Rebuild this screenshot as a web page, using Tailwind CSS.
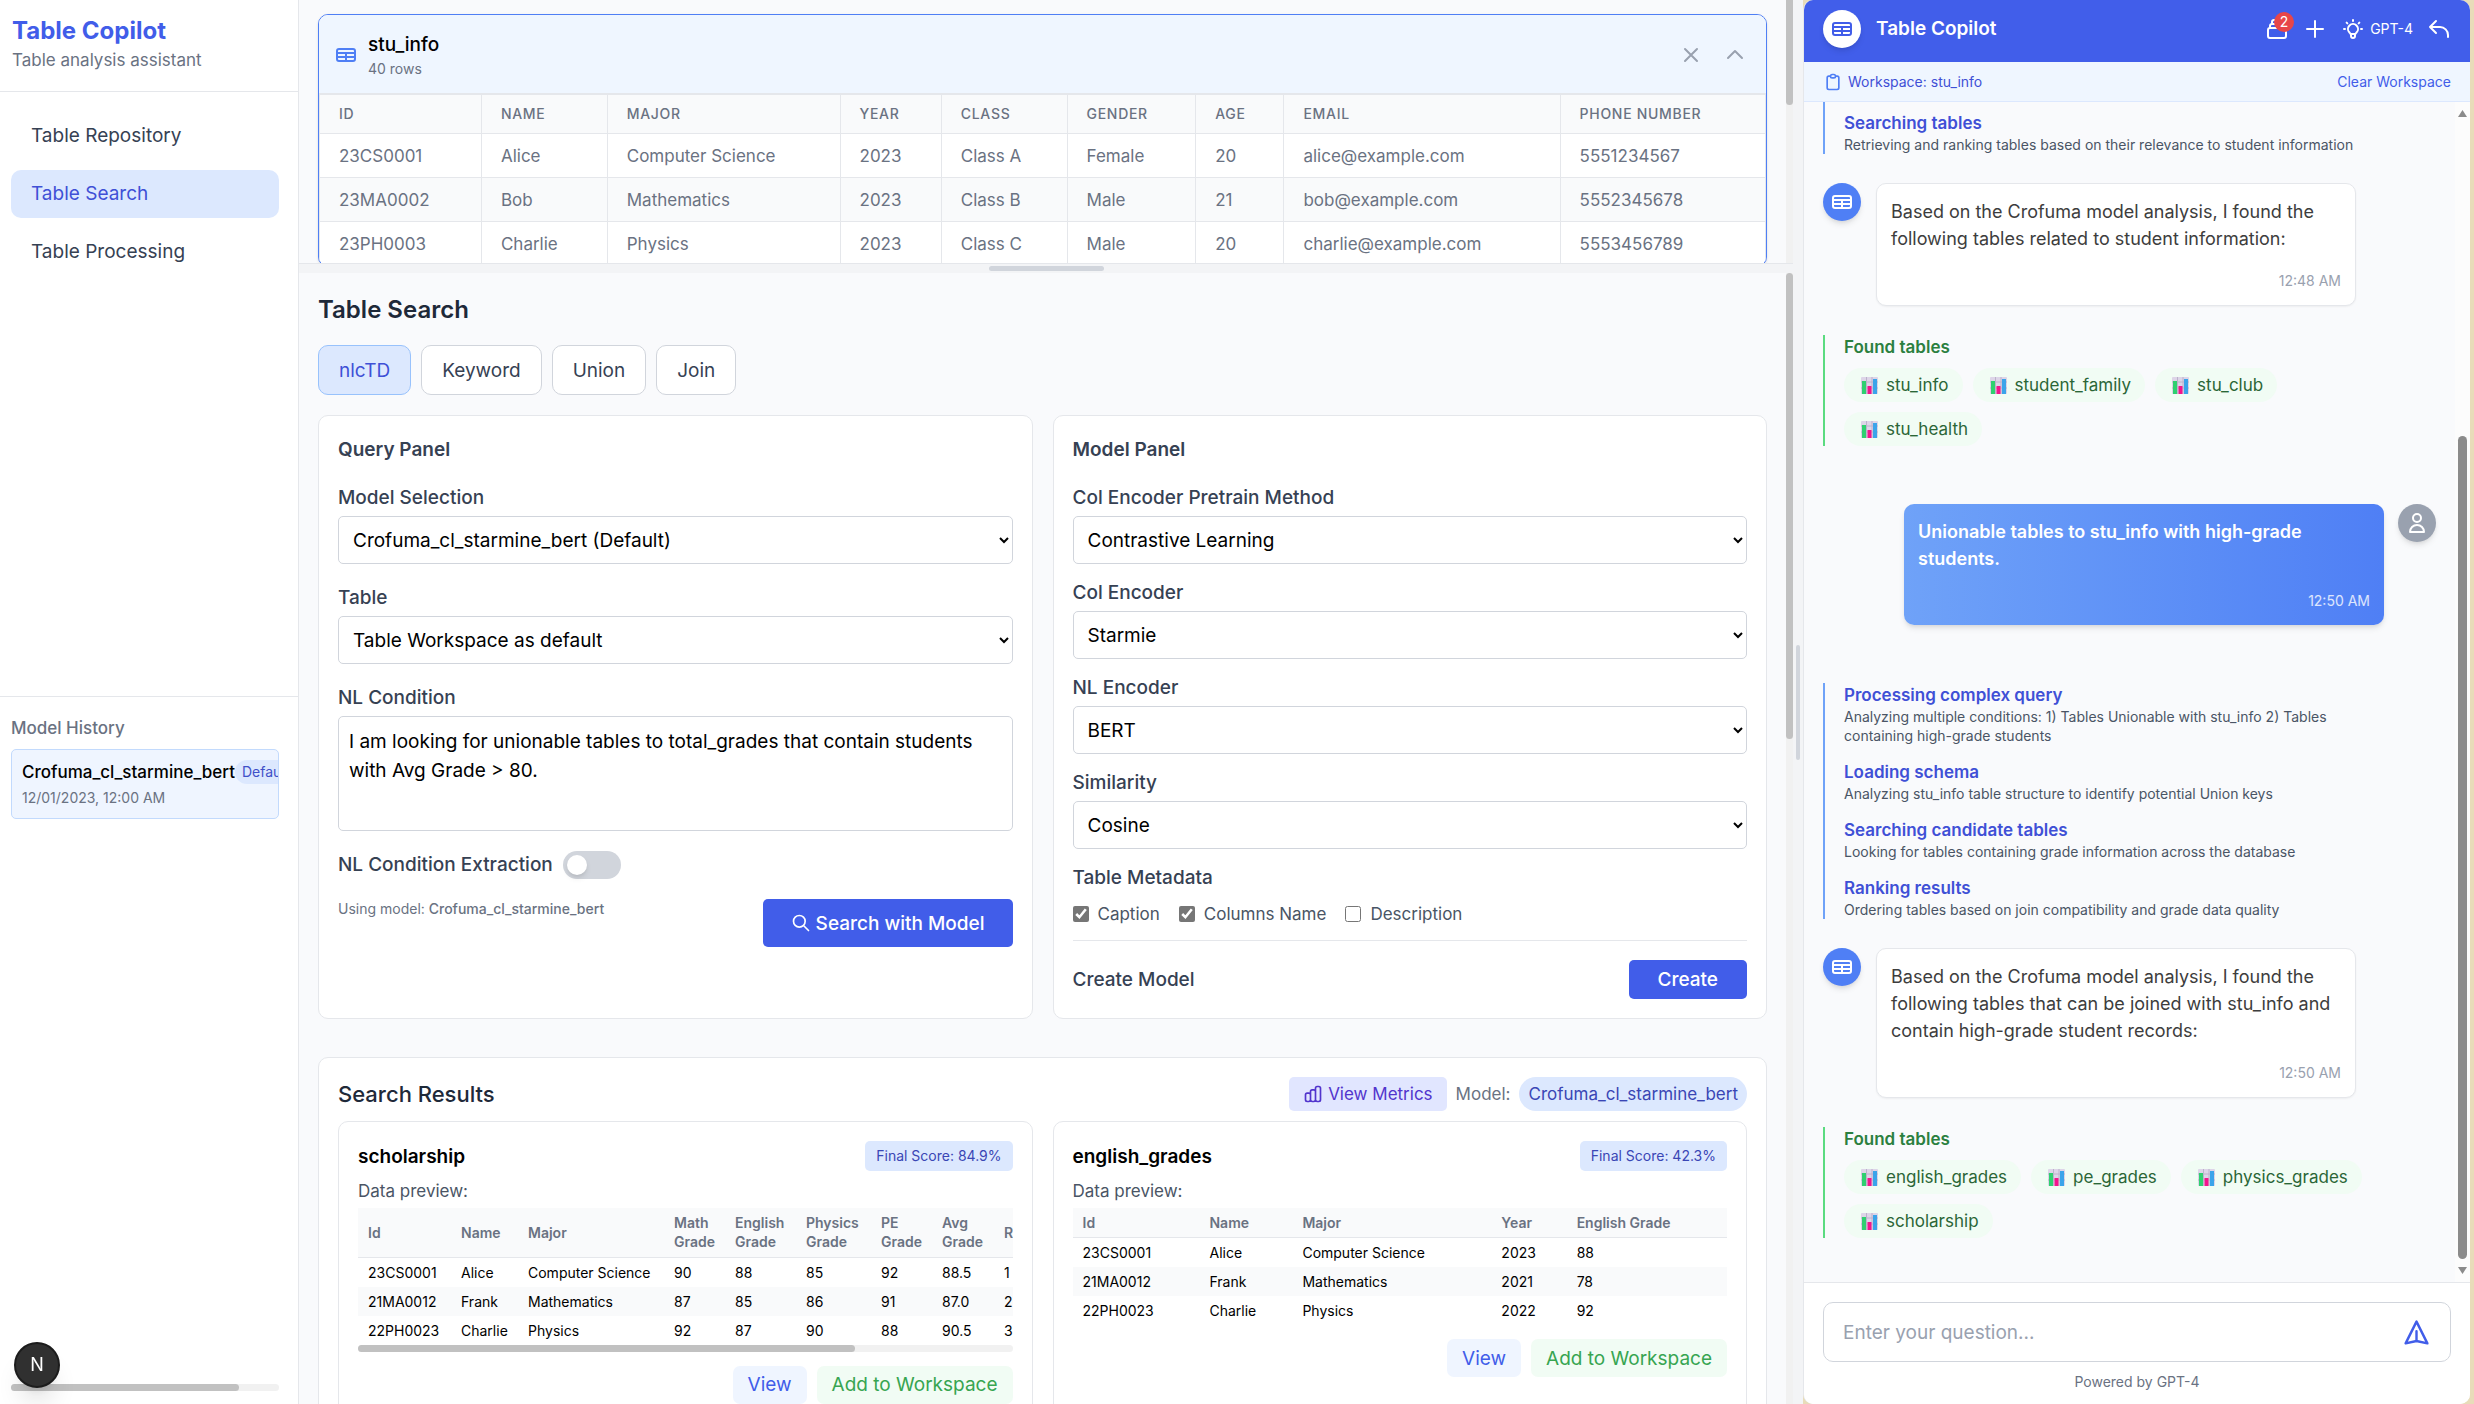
<!DOCTYPE html>
<html lang="en">
<head>
  <meta charset="UTF-8">
  <meta name="viewport" content="width=device-width, initial-scale=1.0">
  <title>Table Copilot</title>
  <script src="https://cdn.jsdelivr.net/npm/@tailwindcss/browser@4"></script>
</head>
<body class="h-screen overflow-hidden flex bg-[#e8dcb9] font-[Inter,sans-serif] text-[17px] leading-6 text-black">

  <!-- Icons shared by several places -->
  <svg class="hidden" aria-hidden="true">
    <symbol id="icon-table" viewBox="0 0 24 24" fill="none" stroke="currentColor" stroke-width="2" stroke-linecap="round" stroke-linejoin="round">
      <path d="M3 10h18M3 14h18m-9-4v8m-7 0h14a2 2 0 002-2V8a2 2 0 00-2-2H5a2 2 0 00-2 2v8a2 2 0 002 2z"/>
    </symbol>
    <symbol id="icon-chart" viewBox="0 0 17 17">
      <rect width="17" height="17" rx="1" fill="#ddd5e8"/>
      <path d="M5.500 0v17M11 0v17M0 5h17M0 11h17" stroke="#bcb2cb" stroke-width="1"/>
      <rect x="1" y="4" width="4" height="13" fill="#2fd070"/>
      <rect x="6.500" y="9" width="4" height="8" fill="#f4148c"/>
      <rect x="12" y="2" width="4" height="15" fill="#3ba4ea"/>
    </symbol>
  </svg>

  <!-- Sidebar -->
  <aside class="w-[299px] shrink-0 h-full flex flex-col bg-white border-r border-gray-200">
    <div class="pt-[14px] pb-[19px] pl-3 border-b border-gray-200">
      <h1 class="text-2xl leading-[34px] font-bold text-[#415de9]">Table Copilot</h1>
      <p class="text-gray-500">Table analysis assistant</p>
    </div>
    <nav class="flex-1 flex flex-col gap-[10px] pt-5 pl-[11px] pr-[19px] text-[19px]">
      <a href="#" class="h-12 flex items-center px-5 rounded-[10px] text-gray-700">Table Repository</a>
      <a href="#" class="h-12 flex items-center px-5 rounded-[10px] bg-[#dce8fe] text-[#3f50d6]">Table Search</a>
      <a href="#" class="h-12 flex items-center px-5 rounded-[10px] text-gray-700">Table Processing</a>
    </nav>
    <div class="h-[50.4%] flex flex-col border-t border-gray-200 pt-[19px] pb-[13px] pl-[11px] pr-[19px]">
      <h2 class="font-medium text-gray-500">Model History</h2>
      <div class="mt-[9px] p-[10px] overflow-hidden rounded-[5px] border border-[#c2dafd] bg-[#eff5ff]">
        <div class="flex items-center whitespace-nowrap">
          <span class="font-medium">Crofuma_cl_starmine_bert</span>
          <span class="px-[7px] py-[2px] rounded-full bg-[#dce8fe] text-sm leading-5 text-[#3f50c8]">Default</span>
        </div>
        <p class="mt-1 text-sm leading-5 text-gray-500">12/01/2023, 12:00 AM</p>
      </div>
      <div class="mt-auto h-[7px] rounded-full bg-[#f1f1f1]">
        <div class="h-full w-[85%] rounded-full bg-[#c1c1c1]"></div>
      </div>
    </div>
  </aside>

  <!-- Workspace and search -->
  <main class="flex-1 min-w-0 h-full flex flex-col bg-[#f9fafc]">

    <section class="h-[263px] shrink-0 flex overflow-hidden">
      <div class="flex-1 min-w-0 pt-[14px] pl-[19px] pr-[19px]">
        <div class="rounded-[10px] border border-[#4f7ff5] bg-white overflow-hidden shadow">
          <div class="flex items-center gap-[10px] pl-[15px] pr-[14px] pt-[15px] pb-[14px] bg-[#eff6ff] border-b border-gray-200">
            <svg class="w-6 h-6 text-[#4f7ff5]"><use href="#icon-table"/></svg>
            <div>
              <h2 class="text-[19px] leading-[29px] font-medium">stu_info</h2>
              <p class="text-sm leading-5 text-gray-500">40 rows</p>
            </div>
            <div class="ml-auto flex gap-[10px] text-gray-400">
              <button class="p-[5px]" aria-label="Close">
                <svg class="w-6 h-6" viewBox="0 0 24 24" fill="none" stroke="currentColor" stroke-width="2" stroke-linecap="round"><path d="M6 18L18 6M6 6l12 12"/></svg>
              </button>
              <button class="p-[5px]" aria-label="Collapse">
                <svg class="w-6 h-6" viewBox="0 0 24 24" fill="none" stroke="currentColor" stroke-width="2" stroke-linecap="round" stroke-linejoin="round"><path d="M5 15l7-7 7 7"/></svg>
              </button>
            </div>
          </div>
          <table class="w-full table-fixed border-collapse border border-gray-200 text-left text-gray-500">
            <colgroup>
              <col class="w-[11.2%]"><col class="w-[8.7%]"><col class="w-[16.1%]"><col class="w-[7%]"><col class="w-[8.7%]"><col class="w-[8.9%]"><col class="w-[6.1%]"><col class="w-[19.1%]"><col>
            </colgroup>
            <thead class="bg-gray-50 text-sm uppercase tracking-wider">
              <tr class="h-[39px] divide-x divide-gray-200 border-b border-gray-200">
                <th class="px-[19px] font-medium">Id</th><th class="px-[19px] font-medium">Name</th><th class="px-[19px] font-medium">Major</th><th class="px-[19px] font-medium">Year</th><th class="px-[19px] font-medium">Class</th><th class="px-[19px] font-medium">Gender</th><th class="px-[19px] font-medium">Age</th><th class="px-[19px] font-medium">Email</th><th class="px-[19px] font-medium">Phone Number</th>
              </tr>
            </thead>
            <tbody>
              <tr class="h-11 divide-x divide-gray-200 border-b border-gray-200">
                <td class="px-[19px]">23CS0001</td><td class="px-[19px]">Alice</td><td class="px-[19px]">Computer Science</td><td class="px-[19px]">2023</td><td class="px-[19px]">Class A</td><td class="px-[19px]">Female</td><td class="px-[19px]">20</td><td class="px-[19px]">alice@example.com</td><td class="px-[19px]">5551234567</td>
              </tr>
              <tr class="h-11 divide-x divide-gray-200 border-b border-gray-200 bg-gray-50">
                <td class="px-[19px]">23MA0002</td><td class="px-[19px]">Bob</td><td class="px-[19px]">Mathematics</td><td class="px-[19px]">2023</td><td class="px-[19px]">Class B</td><td class="px-[19px]">Male</td><td class="px-[19px]">21</td><td class="px-[19px]">bob@example.com</td><td class="px-[19px]">5552345678</td>
              </tr>
              <tr class="h-11 divide-x divide-gray-200 border-b border-gray-200">
                <td class="px-[19px]">23PH0003</td><td class="px-[19px]">Charlie</td><td class="px-[19px]">Physics</td><td class="px-[19px]">2023</td><td class="px-[19px]">Class C</td><td class="px-[19px]">Male</td><td class="px-[19px]">20</td><td class="px-[19px]">charlie@example.com</td><td class="px-[19px]">5553456789</td>
              </tr>
            </tbody>
          </table>
        </div>
      </div>
      <div class="w-[7px] bg-[#f1f1f1]"><div class="h-[40%] rounded-b-full bg-[#c1c1c1]"></div></div>
    </section>

    <!-- Horizontal splitter -->
    <div class="h-[10px] shrink-0 flex items-center justify-center border-t border-gray-200 bg-gray-100">
      <div class="w-[115px] h-[5px] rounded-full bg-gray-300"></div>
    </div>

    <section class="flex-1 min-h-0 flex overflow-hidden">
      <div class="flex-1 min-w-0 px-[19px] pt-5">
        <h2 class="text-2xl leading-[34px] font-semibold text-gray-800">Table Search</h2>

        <div class="mt-[18px] flex gap-[10px] text-[19px] leading-[29px]">
          <button class="h-[50px] px-5 rounded-[10px] border border-[#98c2fc] bg-[#dce8fe] text-[#3f50d6]">nlcTD</button>
          <button class="h-[50px] px-5 rounded-[10px] border border-gray-300 bg-white text-gray-700">Keyword</button>
          <button class="h-[50px] px-5 rounded-[10px] border border-gray-300 bg-white text-gray-700">Union</button>
          <button class="h-[50px] px-5 rounded-[10px] border border-gray-300 bg-white text-gray-700">Join</button>
        </div>

        <div class="mt-5 grid grid-cols-2 gap-5">
          <!-- Query panel -->
          <div class="p-[19px] rounded-[10px] border border-gray-200 bg-white text-[19px] leading-[29px]">
            <h3 class="font-semibold text-gray-700">Query Panel</h3>
            <label for="model" class="block mt-[19px] mb-1 font-medium text-gray-700">Model Selection</label>
            <select id="model" class="block w-full h-12 px-[10px] rounded-[5px] border border-gray-300 bg-white"><option>Crofuma_cl_starmine_bert (Default)</option></select>
            <label for="table" class="block mt-[19px] mb-1 font-medium text-gray-700">Table</label>
            <select id="table" class="block w-full h-12 px-[10px] rounded-[5px] border border-gray-300 bg-white"><option>Table Workspace as default</option></select>
            <label for="condition" class="block mt-[19px] mb-1 font-medium text-gray-700">NL Condition</label>
            <textarea id="condition" class="block w-full h-[115px] p-[10px] rounded-[5px] border border-gray-300 resize-none">I am looking for unionable tables to total_grades that contain students with Avg Grade &gt; 80.</textarea>
            <div class="mt-[19px] flex items-center gap-[10px]">
              <label for="extract" class="font-medium text-gray-700">NL Condition Extraction</label>
              <input id="extract" type="checkbox" role="switch" class="appearance-none flex items-center w-[58px] h-7 px-1 rounded-full bg-gray-300 before:block before:w-5 before:h-5 before:rounded-full before:bg-white before:shadow-md">
            </div>
            <div class="mt-5 flex items-start justify-between">
              <p class="text-sm leading-5 text-gray-500">Using model: <span class="font-medium">Crofuma_cl_starmine_bert</span></p>
              <button class="h-12 px-7 flex items-center gap-[5px] rounded-[5px] bg-[#415de9] text-white font-medium">
                <svg class="w-5 h-5" viewBox="0 0 24 24" fill="none" stroke="currentColor" stroke-width="2" stroke-linecap="round"><path d="M21 21l-6-6m2-5a7 7 0 11-14 0 7 7 0 0114 0z"/></svg>
                Search with Model
              </button>
            </div>
          </div>

          <!-- Model panel -->
          <div class="p-[19px] rounded-[10px] border border-gray-200 bg-white text-[19px] leading-[29px]">
            <h3 class="font-semibold text-gray-700">Model Panel</h3>
            <label for="pretrain" class="block mt-[19px] mb-1 font-medium text-gray-700">Col Encoder Pretrain Method</label>
            <select id="pretrain" class="block w-full h-12 px-[10px] rounded-[5px] border border-gray-300 bg-white"><option>Contrastive Learning</option></select>
            <label for="colEncoder" class="block mt-[14px] mb-1 font-medium text-gray-700">Col Encoder</label>
            <select id="colEncoder" class="block w-full h-12 px-[10px] rounded-[5px] border border-gray-300 bg-white"><option>Starmie</option></select>
            <label for="nlEncoder" class="block mt-[14px] mb-1 font-medium text-gray-700">NL Encoder</label>
            <select id="nlEncoder" class="block w-full h-12 px-[10px] rounded-[5px] border border-gray-300 bg-white"><option>BERT</option></select>
            <label for="similarity" class="block mt-[14px] mb-1 font-medium text-gray-700">Similarity</label>
            <select id="similarity" class="block w-full h-12 px-[10px] rounded-[5px] border border-gray-300 bg-white"><option>Cosine</option></select>
            <p class="mt-[14px] font-medium text-gray-700">Table Metadata</p>
            <div class="mt-[10px] flex gap-[19px] text-[17px] leading-6 text-gray-600">
              <label class="flex items-center gap-[9px]"><input type="checkbox" checked class="w-4 h-4 accent-[#767676]">Caption</label>
              <label class="flex items-center gap-[9px]"><input type="checkbox" checked class="w-4 h-4 accent-[#767676]">Columns Name</label>
              <label class="flex items-center gap-[9px]"><input type="checkbox" class="w-4 h-4 accent-[#767676]">Description</label>
            </div>
            <div class="mt-[14px] pt-[19px] flex items-center justify-between border-t border-gray-200">
              <span class="font-medium text-gray-700">Create Model</span>
              <button class="h-[39px] px-[29px] rounded-[5px] bg-[#415de9] text-white font-medium">Create</button>
            </div>
          </div>
        </div>

        <!-- Results -->
        <div class="mt-[38px] p-[19px] rounded-[10px] border border-gray-200 bg-white">
          <div class="flex items-center">
            <h3 class="text-[22px] leading-[34px] font-medium text-gray-800">Search Results</h3>
            <button class="ml-auto h-[34px] px-[14px] flex items-center gap-[5px] rounded-[5px] bg-[#e1e6ff] text-[#5235cd]">
              <svg class="w-5 h-5" viewBox="0 0 24 24" fill="none" stroke="currentColor" stroke-width="2" stroke-linecap="round" stroke-linejoin="round"><path d="M9 19v-6a2 2 0 00-2-2H5a2 2 0 00-2 2v6a2 2 0 002 2h2a2 2 0 002-2zm0 0V9a2 2 0 012-2h2a2 2 0 012 2v10m-6 0a2 2 0 002 2h2a2 2 0 002-2m0 0V5a2 2 0 012-2h2a2 2 0 012 2v14a2 2 0 01-2 2h-2a2 2 0 01-2-2z"/></svg>
              View Metrics
            </button>
            <span class="ml-[9px] text-gray-500">Model:</span>
            <span class="ml-[9px] px-[9px] py-[5px] rounded-full bg-[#dce8fe] text-[#3a46b5]">Crofuma_cl_starmine_bert</span>
          </div>

          <div class="mt-[10px] grid grid-cols-2 gap-5">
            <div class="min-w-0 p-[19px] rounded-[10px] border border-gray-200">
              <div class="flex items-center justify-between">
                <h4 class="text-[19px] leading-[29px] font-semibold">scholarship</h4>
                <span class="px-[11px] py-[5px] rounded-[5px] bg-[#dce8fe] text-sm leading-5 text-[#3a46b5]">Final Score: 84.9%</span>
              </div>
              <p class="mt-2 text-gray-600">Data preview:</p>
              <div class="mt-[5px] overflow-hidden">
                <table class="w-[857px] table-fixed text-left text-sm leading-[19px]">
                  <colgroup>
                    <col class="w-[93px]"><col class="w-[67px]"><col class="w-[146px]"><col class="w-[61px]"><col class="w-[71px]"><col class="w-[75px]"><col class="w-[61px]"><col class="w-[62px]"><col>
                  </colgroup>
                  <thead class="bg-gray-50 text-gray-500">
                    <tr class="h-[49px] border-b border-gray-200">
                      <th class="px-[10px] font-semibold">Id</th><th class="px-[10px] font-semibold">Name</th><th class="px-[10px] font-semibold">Major</th><th class="px-[10px] font-semibold">Math<br>Grade</th><th class="px-[10px] font-semibold">English<br>Grade</th><th class="pl-[10px] font-semibold">Physics<br>Grade</th><th class="px-[10px] font-semibold">PE<br>Grade</th><th class="px-[10px] font-semibold">Avg<br>Grade</th><th class="px-[10px] font-semibold">Rank</th>
                    </tr>
                  </thead>
                  <tbody>
                    <tr><td class="px-[10px] py-[5px]">23CS0001</td><td class="px-[10px]">Alice</td><td class="pl-[10px] whitespace-nowrap">Computer Science</td><td class="px-[10px]">90</td><td class="px-[10px]">88</td><td class="px-[10px]">85</td><td class="px-[10px]">92</td><td class="px-[10px]">88.5</td><td class="px-[10px]">1</td></tr>
                    <tr class="bg-gray-50"><td class="px-[10px] py-[5px]">21MA0012</td><td class="px-[10px]">Frank</td><td class="px-[10px]">Mathematics</td><td class="px-[10px]">87</td><td class="px-[10px]">85</td><td class="px-[10px]">86</td><td class="px-[10px]">91</td><td class="px-[10px]">87.0</td><td class="px-[10px]">2</td></tr>
                    <tr><td class="px-[10px] py-[5px]">22PH0023</td><td class="px-[10px]">Charlie</td><td class="px-[10px]">Physics</td><td class="px-[10px]">92</td><td class="px-[10px]">87</td><td class="px-[10px]">90</td><td class="px-[10px]">88</td><td class="px-[10px]">90.5</td><td class="px-[10px]">3</td></tr>
                  </tbody>
                </table>
                <div class="h-[7px] rounded-full bg-[#f1f1f1]"><div class="h-full w-[76%] rounded-full bg-[#c1c1c1]"></div></div>
              </div>
              <div class="mt-[14px] flex justify-end gap-[10px] text-[19px] leading-[29px]">
                <button class="h-[38px] px-[15px] rounded-[7px] bg-[#eff5ff] text-[#415de9]">View</button>
                <button class="h-[38px] px-[15px] rounded-[7px] bg-[#f1fcf4] text-[#37a551]">Add to Workspace</button>
              </div>
            </div>

            <div class="min-w-0 p-[19px] rounded-[10px] border border-gray-200">
              <div class="flex items-center justify-between">
                <h4 class="text-[19px] leading-[29px] font-semibold">english_grades</h4>
                <span class="px-[11px] py-[5px] rounded-[5px] bg-[#dce8fe] text-sm leading-5 text-[#3a46b5]">Final Score: 42.3%</span>
              </div>
              <p class="mt-2 text-gray-600">Data preview:</p>
              <table class="mt-[5px] w-full table-fixed text-left text-sm leading-[19px]">
                <colgroup>
                  <col class="w-[19.4%]"><col class="w-[14.2%]"><col class="w-[30.4%]"><col class="w-[11.5%]"><col>
                </colgroup>
                <thead class="bg-gray-50 text-gray-500">
                  <tr class="border-b border-gray-200">
                    <th class="px-[10px] py-[5px] font-semibold">Id</th><th class="px-[10px] font-semibold">Name</th><th class="px-[10px] font-semibold">Major</th><th class="px-[10px] font-semibold">Year</th><th class="px-[10px] font-semibold">English Grade</th>
                  </tr>
                </thead>
                <tbody>
                  <tr><td class="px-[10px] py-[5px]">23CS0001</td><td class="px-[10px]">Alice</td><td class="px-[10px]">Computer Science</td><td class="px-[10px]">2023</td><td class="px-[10px]">88</td></tr>
                  <tr class="bg-gray-50"><td class="px-[10px] py-[5px]">21MA0012</td><td class="px-[10px]">Frank</td><td class="px-[10px]">Mathematics</td><td class="px-[10px]">2021</td><td class="px-[10px]">78</td></tr>
                  <tr><td class="px-[10px] py-[5px]">22PH0023</td><td class="px-[10px]">Charlie</td><td class="px-[10px]">Physics</td><td class="px-[10px]">2022</td><td class="px-[10px]">92</td></tr>
                </tbody>
              </table>
              <div class="mt-[14px] flex justify-end gap-[10px] text-[19px] leading-[29px]">
                <button class="h-[38px] px-[15px] rounded-[7px] bg-[#eff5ff] text-[#415de9]">View</button>
                <button class="h-[38px] px-[15px] rounded-[7px] bg-[#f1fcf4] text-[#37a551]">Add to Workspace</button>
              </div>
            </div>
          </div>
        </div>
      </div>
      <div class="w-[7px] bg-[#f1f1f1]"><div class="h-[41.2%] rounded-full bg-[#c1c1c1]"></div></div>
    </section>
  </main>

  <!-- Vertical splitter -->
  <div class="w-[10px] shrink-0 flex items-center justify-center bg-gray-100">
    <div class="w-1 h-[115px] rounded-full bg-gray-300"></div>
  </div>

  <!-- Chat -->
  <aside class="w-[667px] mr-1 shrink-0 h-full flex flex-col border-l border-gray-200 rounded-[10px] overflow-hidden bg-[#f9fafc]">
    <header class="h-[62px] shrink-0 pl-[19px] pr-[19px] pb-[5px] flex items-center bg-[#415eea] text-white">
      <div class="w-[38px] h-[38px] flex items-center justify-center rounded-full bg-white text-[#415de9] shadow-md">
        <svg class="w-6 h-6"><use href="#icon-table"/></svg>
      </div>
      <h2 class="ml-[15px] text-[19px] leading-[29px] font-semibold">Table Copilot</h2>
      <div class="ml-auto flex items-center gap-[14px] text-sm">
        <button class="relative" aria-label="Workspace tables">
          <svg class="w-6 h-6" viewBox="0 0 24 24" fill="none" stroke="currentColor" stroke-width="2" stroke-linecap="round" stroke-linejoin="round"><path d="M19 11H5m14 0a2 2 0 012 2v6a2 2 0 01-2 2H5a2 2 0 01-2-2v-6a2 2 0 012-2m14 0V9a2 2 0 00-2-2M5 11V9a2 2 0 012-2m0 0V5a2 2 0 012-2h6a2 2 0 012 2v2M7 7h10"/></svg>
          <span class="absolute -top-[5px] -right-[5px] w-5 h-5 rounded-full bg-[#e7464a] text-sm leading-5 text-center">2</span>
        </button>
        <button aria-label="New chat">
          <svg class="w-6 h-6" viewBox="0 0 24 24" fill="none" stroke="currentColor" stroke-width="2" stroke-linecap="round"><path d="M12 4v16m8-8H4"/></svg>
        </button>
        <button class="flex items-center gap-[5px]">
          <svg class="w-6 h-6" viewBox="0 0 24 24" fill="none" stroke="currentColor" stroke-width="2" stroke-linecap="round" stroke-linejoin="round"><path d="M9.663 17h4.673M12 3v1m6.364 1.636l-.707.707M21 12h-1M4 12H3m3.343-5.657l-.707-.707m2.828 9.900a5 5 0 117.072 0l-.548.547A3.374 3.374 0 0014 18.469V19a2 2 0 11-4 0v-.531c0-.895-.356-1.754-.988-2.386l-.548-.547z"/></svg>
          GPT-4
        </button>
        <button aria-label="Back">
          <svg class="w-6 h-6" viewBox="0 0 24 24" fill="none" stroke="currentColor" stroke-width="2" stroke-linecap="round" stroke-linejoin="round"><path d="M3 10h10a8 8 0 018 8v2M3 10l6 6m-6-6l6-6"/></svg>
        </button>
      </div>
    </header>

    <div class="h-10 shrink-0 px-[19px] flex items-center justify-between border-b border-[#dce8fe] bg-[#eff6ff] text-sm">
      <span class="flex items-center gap-[5px] text-[#3f50d6]">
        <svg class="w-5 h-5 text-[#4f7ff5]" viewBox="0 0 24 24" fill="none" stroke="currentColor" stroke-width="2" stroke-linecap="round" stroke-linejoin="round"><path d="M9 5H7a2 2 0 00-2 2v12a2 2 0 002 2h10a2 2 0 002-2V7a2 2 0 00-2-2h-2M9 5a2 2 0 002 2h2a2 2 0 002-2M9 5a2 2 0 012-2h2a2 2 0 012 2"/></svg>
        Workspace: stu_info
      </span>
      <button class="text-[#415de9]">Clear Workspace</button>
    </div>

    <div class="flex-1 min-h-0 flex">
      <div class="flex-1 min-w-0 px-[19px]">
        <div class="pt-[9px] pl-[19px] border-l-2 border-[#6fa2f8]">
          <h3 class="font-semibold text-[#3f50d6]">Searching tables</h3>
          <p class="text-sm leading-[19px] text-gray-600">Retrieving and ranking tables based on their relevance to student information</p>
        </div>

        <div class="mt-[29px] flex items-start gap-[15px]">
          <div class="w-[38px] h-[38px] shrink-0 flex items-center justify-center rounded-full bg-[#4f7ff5] text-white shadow-md">
            <svg class="w-6 h-6"><use href="#icon-table"/></svg>
          </div>
          <div class="w-[480px] p-[14px] rounded-[10px] border border-gray-200 bg-white shadow-xs">
            <p class="text-lg leading-[27px] text-[#3d3d3d]">Based on the Crofuma model analysis, I found the following tables related to student information:</p>
            <p class="mt-[19px] text-right text-sm leading-5 text-gray-400">12:48 AM</p>
          </div>
        </div>

        <div class="mt-[29px] pl-[19px] border-l-2 border-[#5bdb80]">
          <h3 class="font-semibold text-[#2b8040]">Found tables</h3>
          <div class="mt-[9px] pr-[60px] flex flex-wrap gap-[10px] text-[#2b6637]">
            <button class="h-[34px] pl-[17px] pr-[14px] flex items-center gap-2 rounded-full bg-[#f1fcf4]"><svg class="w-[17px] h-[17px]"><use href="#icon-chart"/></svg>stu_info</button>
            <button class="h-[34px] pl-[17px] pr-[14px] flex items-center gap-2 rounded-full bg-[#f1fcf4]"><svg class="w-[17px] h-[17px]"><use href="#icon-chart"/></svg>student_family</button>
            <button class="h-[34px] pl-[17px] pr-[14px] flex items-center gap-2 rounded-full bg-[#f1fcf4]"><svg class="w-[17px] h-[17px]"><use href="#icon-chart"/></svg>stu_club</button>
            <button class="h-[34px] pl-[17px] pr-[14px] flex items-center gap-2 rounded-full bg-[#f1fcf4]"><svg class="w-[17px] h-[17px]"><use href="#icon-chart"/></svg>stu_health</button>
          </div>
        </div>

        <div class="mt-[58px] flex items-start justify-end gap-[14px]">
          <div class="w-[480px] p-[14px] rounded-[10px] bg-linear-to-r from-[#6fa2f8] to-[#4f7ff5] text-white shadow-md">
            <p class="w-[420px] text-lg leading-[27px] font-semibold">Unionable tables to stu_info with high-grade students.</p>
            <p class="mt-[19px] text-right text-sm leading-5 text-white/80">12:50 AM</p>
          </div>
          <div class="w-[38px] h-[38px] shrink-0 flex items-center justify-center rounded-full bg-gray-400 text-white shadow-md">
            <svg class="w-6 h-6" viewBox="0 0 24 24" fill="none" stroke="currentColor" stroke-width="2" stroke-linecap="round" stroke-linejoin="round"><path d="M16 7a4 4 0 11-8 0 4 4 0 018 0zM12 14a7 7 0 00-7 7h14a7 7 0 00-7-7z"/></svg>
          </div>
        </div>

        <div class="mt-[58px] pl-[19px] pr-[80px] flex flex-col gap-[15px] border-l-2 border-[#6fa2f8]">
          <div>
            <h3 class="font-semibold text-[#3f50d6]">Processing complex query</h3>
            <p class="text-sm leading-[19px] text-gray-600">Analyzing multiple conditions: 1) Tables Unionable with stu_info 2) Tables containing high-grade students</p>
          </div>
          <div>
            <h3 class="font-semibold text-[#3f50d6]">Loading schema</h3>
            <p class="text-sm leading-[19px] text-gray-600">Analyzing stu_info table structure to identify potential Union keys</p>
          </div>
          <div>
            <h3 class="font-semibold text-[#3f50d6]">Searching candidate tables</h3>
            <p class="text-sm leading-[19px] text-gray-600">Looking for tables containing grade information across the database</p>
          </div>
          <div>
            <h3 class="font-semibold text-[#3f50d6]">Ranking results</h3>
            <p class="text-sm leading-[19px] text-gray-600">Ordering tables based on join compatibility and grade data quality</p>
          </div>
        </div>

        <div class="mt-[29px] flex items-start gap-[15px]">
          <div class="w-[38px] h-[38px] shrink-0 flex items-center justify-center rounded-full bg-[#4f7ff5] text-white shadow-md">
            <svg class="w-6 h-6"><use href="#icon-table"/></svg>
          </div>
          <div class="w-[480px] p-[14px] rounded-[10px] border border-gray-200 bg-white shadow-xs">
            <p class="text-lg leading-[27px] text-[#3d3d3d]">Based on the Crofuma model analysis, I found the following tables that can be joined with stu_info and contain high-grade student records:</p>
            <p class="mt-[19px] text-right text-sm leading-5 text-gray-400">12:50 AM</p>
          </div>
        </div>

        <div class="mt-[29px] pl-[19px] border-l-2 border-[#5bdb80]">
          <h3 class="font-semibold text-[#2b8040]">Found tables</h3>
          <div class="mt-[9px] pr-[60px] flex flex-wrap gap-[10px] text-[#2b6637]">
            <button class="h-[34px] pl-[17px] pr-[14px] flex items-center gap-2 rounded-full bg-[#f1fcf4]"><svg class="w-[17px] h-[17px]"><use href="#icon-chart"/></svg>english_grades</button>
            <button class="h-[34px] pl-[17px] pr-[14px] flex items-center gap-2 rounded-full bg-[#f1fcf4]"><svg class="w-[17px] h-[17px]"><use href="#icon-chart"/></svg>pe_grades</button>
            <button class="h-[34px] pl-[17px] pr-[14px] flex items-center gap-2 rounded-full bg-[#f1fcf4]"><svg class="w-[17px] h-[17px]"><use href="#icon-chart"/></svg>physics_grades</button>
            <button class="h-[34px] pl-[17px] pr-[14px] flex items-center gap-2 rounded-full bg-[#f1fcf4]"><svg class="w-[17px] h-[17px]"><use href="#icon-chart"/></svg>scholarship</button>
          </div>
        </div>
      </div>

      <!-- Scrollbar -->
      <div class="w-[15px] pt-2 pb-2 flex flex-col items-center bg-[#fcfcfc]">
        <svg class="w-[9px] h-[7px]" viewBox="0 0 9 7"><path d="M4.500 0L9 7H0z" fill="#8b8b8b"/></svg>
        <div class="flex-1 w-[9px] pt-[319px] pb-2 flex">
          <div class="flex-1 rounded-full bg-[#8b8b8b]"></div>
        </div>
        <svg class="w-[9px] h-[7px]" viewBox="0 0 9 7"><path d="M0 0h9L4.500 7z" fill="#8b8b8b"/></svg>
      </div>
    </div>

    <footer class="shrink-0 px-[19px] pt-[19px] pb-3 border-t border-gray-200 bg-white">
      <div class="h-[60px] pl-[19px] pr-[19px] flex items-center rounded-[10px] border border-gray-300">
        <input type="text" aria-label="Question" placeholder="Enter your question..." class="flex-1 text-[19px] leading-[29px] placeholder:text-gray-400 outline-none">
        <button class="text-[#415de9]" aria-label="Send">
          <svg class="w-[29px] h-[29px]" viewBox="0 0 24 24" fill="none" stroke="currentColor" stroke-width="2" stroke-linecap="round" stroke-linejoin="round"><path d="M12 19l9 2-9-18-9 18 9-2zm0 0v-8"/></svg>
        </button>
      </div>
      <p class="mt-[10px] text-center text-sm leading-5 text-gray-500">Powered by GPT-4</p>
    </footer>
  </aside>

  <!-- Dev tools badge -->
  <button class="fixed left-[14px] bottom-4 w-[46px] h-[46px] rounded-full bg-[#303030] border-2 border-[#1c1c1c] text-white text-lg shadow-xl" aria-label="Dev tools">N</button>

</body>
</html>
